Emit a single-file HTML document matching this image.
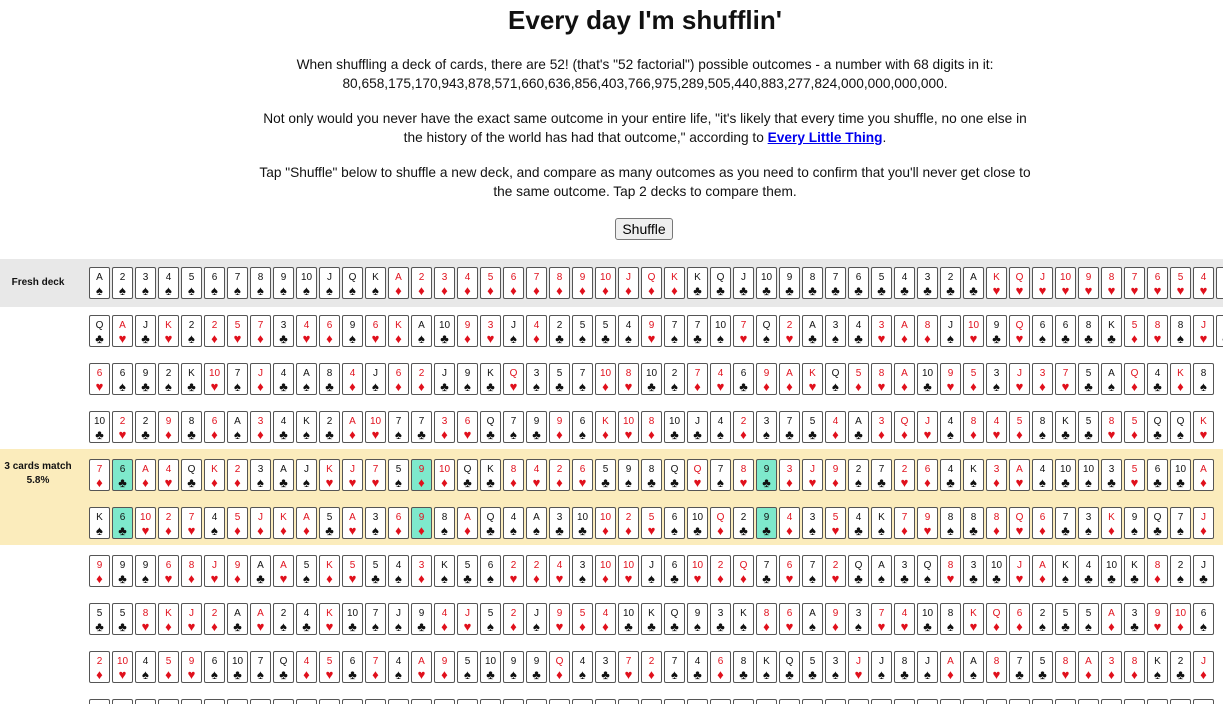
<!DOCTYPE html>
<html style="overflow:hidden;width:1223px;height:704px"><head><meta charset="utf-8"><style>
body{margin:0;width:1223px;height:704px;overflow:hidden;background:#fff;font-family:"Liberation Sans",sans-serif;color:#111;position:relative}
h1{position:absolute;top:4px;left:0;width:1290px;text-align:center;margin:0;font-size:26px;font-weight:bold;line-height:32px}
.p{position:absolute;left:255px;width:780px;text-align:center;font-size:13.7px;line-height:19px;margin:0}
a{color:#00e;text-decoration:underline;font-weight:bold}
button{position:absolute;left:615px;top:218px;width:58px;height:22px;font-size:14px;font-family:"Liberation Sans",sans-serif;padding:0;border:1px solid #777;border-radius:3px;background:#efefef}
.band{position:absolute;left:0;width:1223px}
.row{position:absolute;left:89px;height:34px;white-space:nowrap;width:1300px}
.lab{position:absolute;left:0;width:76px;text-align:center;font-size:10px;font-weight:bold;line-height:14px}
i{display:inline-block;font-style:normal;width:19px;border:1px solid #555;border-radius:2px;background:#fff;margin-right:2px;text-align:center;font-size:10px;line-height:12px;padding-top:4px;box-sizing:content-box;height:26px;vertical-align:top;color:#111}
i b{display:block;font-size:13px;line-height:14px;font-weight:normal}
i.r{color:#e0101c}
i.m{background:#7ee9cc}
</style></head><body>
<h1>Every day I'm shufflin'</h1>
<p class="p" style="top:55px">When shuffling a deck of cards, there are 52! (that's "52 factorial") possible outcomes - a number with 68 digits in it: 80,658,175,170,943,878,571,660,636,856,403,766,975,289,505,440,883,277,824,000,000,000,000.</p>
<p class="p" style="top:109px">Not only would you never have the exact same outcome in your entire life, "it's likely that every time you shuffle, no one else in the history of the world has had that outcome," according to <a>Every Little Thing</a>.</p>
<p class="p" style="top:163px">Tap "Shuffle" below to shuffle a new deck, and compare as many outcomes as you need to confirm that you'll never get close to the same outcome. Tap 2 decks to compare them.</p>
<button>Shuffle</button>
<div class="band" style="top:259px;height:48px;background:#e8e8e8"></div>
<div class="band" style="top:449px;height:96px;background:#fbecbc"></div>
<div class="lab" style="top:276px">Fresh deck</div>
<div class="lab" style="top:460px">3 cards match<br>5.8%</div>

<div class="row" style="top:267px"><i>A<b>♠</b></i><i>2<b>♠</b></i><i>3<b>♠</b></i><i>4<b>♠</b></i><i>5<b>♠</b></i><i>6<b>♠</b></i><i>7<b>♠</b></i><i>8<b>♠</b></i><i>9<b>♠</b></i><i>10<b>♠</b></i><i>J<b>♠</b></i><i>Q<b>♠</b></i><i>K<b>♠</b></i><i class=r>A<b>♦</b></i><i class=r>2<b>♦</b></i><i class=r>3<b>♦</b></i><i class=r>4<b>♦</b></i><i class=r>5<b>♦</b></i><i class=r>6<b>♦</b></i><i class=r>7<b>♦</b></i><i class=r>8<b>♦</b></i><i class=r>9<b>♦</b></i><i class=r>10<b>♦</b></i><i class=r>J<b>♦</b></i><i class=r>Q<b>♦</b></i><i class=r>K<b>♦</b></i><i>K<b>♣</b></i><i>Q<b>♣</b></i><i>J<b>♣</b></i><i>10<b>♣</b></i><i>9<b>♣</b></i><i>8<b>♣</b></i><i>7<b>♣</b></i><i>6<b>♣</b></i><i>5<b>♣</b></i><i>4<b>♣</b></i><i>3<b>♣</b></i><i>2<b>♣</b></i><i>A<b>♣</b></i><i class=r>K<b>♥</b></i><i class=r>Q<b>♥</b></i><i class=r>J<b>♥</b></i><i class=r>10<b>♥</b></i><i class=r>9<b>♥</b></i><i class=r>8<b>♥</b></i><i class=r>7<b>♥</b></i><i class=r>6<b>♥</b></i><i class=r>5<b>♥</b></i><i class=r>4<b>♥</b></i><i class=r>3<b>♥</b></i></div>

<div class="row" style="top:315px"><i>Q<b>♣</b></i><i class=r>A<b>♥</b></i><i>J<b>♣</b></i><i class=r>K<b>♥</b></i><i>2<b>♠</b></i><i class=r>2<b>♦</b></i><i class=r>5<b>♥</b></i><i class=r>7<b>♦</b></i><i>3<b>♣</b></i><i class=r>4<b>♥</b></i><i class=r>6<b>♦</b></i><i>9<b>♠</b></i><i class=r>6<b>♥</b></i><i class=r>K<b>♦</b></i><i>A<b>♠</b></i><i>10<b>♣</b></i><i class=r>9<b>♦</b></i><i class=r>3<b>♥</b></i><i>J<b>♠</b></i><i class=r>4<b>♦</b></i><i>2<b>♣</b></i><i>5<b>♠</b></i><i>5<b>♣</b></i><i>4<b>♠</b></i><i class=r>9<b>♥</b></i><i>7<b>♠</b></i><i>7<b>♣</b></i><i>10<b>♠</b></i><i class=r>7<b>♥</b></i><i>Q<b>♠</b></i><i class=r>2<b>♥</b></i><i>A<b>♣</b></i><i>3<b>♠</b></i><i>4<b>♣</b></i><i class=r>3<b>♥</b></i><i class=r>A<b>♦</b></i><i class=r>8<b>♦</b></i><i>J<b>♠</b></i><i class=r>10<b>♥</b></i><i>9<b>♣</b></i><i class=r>Q<b>♥</b></i><i>6<b>♠</b></i><i>6<b>♣</b></i><i>8<b>♣</b></i><i>K<b>♣</b></i><i class=r>5<b>♦</b></i><i class=r>8<b>♥</b></i><i>8<b>♠</b></i><i class=r>J<b>♥</b></i><i>4<b>♣</b></i></div>

<div class="row" style="top:363px"><i class=r>6<b>♥</b></i><i>6<b>♠</b></i><i>9<b>♣</b></i><i>2<b>♠</b></i><i>K<b>♣</b></i><i class=r>10<b>♥</b></i><i>7<b>♠</b></i><i class=r>J<b>♦</b></i><i>4<b>♣</b></i><i>A<b>♠</b></i><i>8<b>♣</b></i><i class=r>4<b>♦</b></i><i>J<b>♠</b></i><i class=r>6<b>♦</b></i><i class=r>2<b>♦</b></i><i>J<b>♣</b></i><i>9<b>♠</b></i><i>K<b>♣</b></i><i class=r>Q<b>♥</b></i><i>3<b>♠</b></i><i>5<b>♣</b></i><i>7<b>♠</b></i><i class=r>10<b>♦</b></i><i class=r>8<b>♥</b></i><i>10<b>♣</b></i><i>2<b>♠</b></i><i class=r>7<b>♦</b></i><i class=r>4<b>♥</b></i><i>6<b>♣</b></i><i class=r>9<b>♦</b></i><i class=r>A<b>♦</b></i><i class=r>K<b>♥</b></i><i>Q<b>♠</b></i><i class=r>5<b>♦</b></i><i class=r>8<b>♥</b></i><i class=r>A<b>♦</b></i><i>10<b>♣</b></i><i class=r>9<b>♥</b></i><i class=r>5<b>♦</b></i><i>3<b>♠</b></i><i class=r>J<b>♥</b></i><i class=r>3<b>♦</b></i><i class=r>7<b>♥</b></i><i>5<b>♣</b></i><i>A<b>♠</b></i><i class=r>Q<b>♦</b></i><i>4<b>♣</b></i><i class=r>K<b>♦</b></i><i>8<b>♠</b></i></div>

<div class="row" style="top:411px"><i>10<b>♣</b></i><i class=r>2<b>♥</b></i><i>2<b>♣</b></i><i class=r>9<b>♦</b></i><i>8<b>♣</b></i><i class=r>6<b>♦</b></i><i>A<b>♠</b></i><i class=r>3<b>♦</b></i><i>4<b>♣</b></i><i>K<b>♠</b></i><i>2<b>♣</b></i><i class=r>A<b>♦</b></i><i class=r>10<b>♥</b></i><i>7<b>♠</b></i><i>7<b>♣</b></i><i class=r>3<b>♦</b></i><i class=r>6<b>♥</b></i><i>Q<b>♣</b></i><i>7<b>♠</b></i><i>9<b>♣</b></i><i class=r>9<b>♦</b></i><i>6<b>♠</b></i><i class=r>K<b>♦</b></i><i class=r>10<b>♥</b></i><i class=r>8<b>♦</b></i><i>10<b>♣</b></i><i>J<b>♣</b></i><i>4<b>♠</b></i><i class=r>2<b>♦</b></i><i>3<b>♠</b></i><i>7<b>♣</b></i><i>5<b>♣</b></i><i class=r>4<b>♦</b></i><i>A<b>♣</b></i><i class=r>3<b>♦</b></i><i class=r>Q<b>♦</b></i><i class=r>J<b>♥</b></i><i>4<b>♠</b></i><i class=r>8<b>♦</b></i><i class=r>4<b>♥</b></i><i class=r>5<b>♦</b></i><i>8<b>♠</b></i><i>K<b>♣</b></i><i>5<b>♣</b></i><i class=r>8<b>♥</b></i><i class=r>5<b>♦</b></i><i>Q<b>♣</b></i><i>Q<b>♠</b></i><i class=r>K<b>♥</b></i></div>

<div class="row" style="top:459px"><i class=r>7<b>♦</b></i><i class=m>6<b>♣</b></i><i class=r>A<b>♦</b></i><i class=r>4<b>♥</b></i><i>Q<b>♣</b></i><i class=r>K<b>♦</b></i><i class=r>2<b>♦</b></i><i>3<b>♠</b></i><i>A<b>♣</b></i><i>J<b>♠</b></i><i class=r>K<b>♥</b></i><i class=r>J<b>♥</b></i><i class=r>7<b>♥</b></i><i>5<b>♠</b></i><i class="r m">9<b>♦</b></i><i class=r>10<b>♦</b></i><i>Q<b>♣</b></i><i>K<b>♣</b></i><i class=r>8<b>♦</b></i><i class=r>4<b>♥</b></i><i class=r>2<b>♦</b></i><i class=r>6<b>♥</b></i><i>5<b>♣</b></i><i>9<b>♠</b></i><i>8<b>♣</b></i><i>Q<b>♣</b></i><i class=r>Q<b>♥</b></i><i>7<b>♠</b></i><i class=r>8<b>♥</b></i><i class=m>9<b>♣</b></i><i class=r>3<b>♦</b></i><i class=r>J<b>♥</b></i><i class=r>9<b>♦</b></i><i>2<b>♠</b></i><i>7<b>♣</b></i><i class=r>2<b>♥</b></i><i class=r>6<b>♦</b></i><i>4<b>♣</b></i><i>K<b>♠</b></i><i class=r>3<b>♦</b></i><i class=r>A<b>♥</b></i><i>4<b>♠</b></i><i>10<b>♣</b></i><i>10<b>♠</b></i><i>3<b>♣</b></i><i class=r>5<b>♥</b></i><i>6<b>♣</b></i><i>10<b>♣</b></i><i class=r>A<b>♦</b></i></div>

<div class="row" style="top:507px"><i>K<b>♠</b></i><i class=m>6<b>♣</b></i><i class=r>10<b>♥</b></i><i class=r>2<b>♦</b></i><i class=r>7<b>♥</b></i><i>4<b>♠</b></i><i class=r>5<b>♦</b></i><i class=r>J<b>♦</b></i><i class=r>K<b>♦</b></i><i class=r>A<b>♦</b></i><i>5<b>♣</b></i><i class=r>A<b>♥</b></i><i>3<b>♠</b></i><i class=r>6<b>♦</b></i><i class="r m">9<b>♦</b></i><i>8<b>♠</b></i><i class=r>A<b>♦</b></i><i>Q<b>♣</b></i><i>4<b>♠</b></i><i>A<b>♠</b></i><i>3<b>♣</b></i><i>10<b>♣</b></i><i class=r>10<b>♦</b></i><i class=r>2<b>♦</b></i><i class=r>5<b>♥</b></i><i>6<b>♠</b></i><i>10<b>♣</b></i><i class=r>Q<b>♦</b></i><i>2<b>♣</b></i><i class=m>9<b>♣</b></i><i class=r>4<b>♦</b></i><i>3<b>♠</b></i><i class=r>5<b>♥</b></i><i>4<b>♣</b></i><i>K<b>♠</b></i><i class=r>7<b>♦</b></i><i class=r>9<b>♥</b></i><i>8<b>♠</b></i><i>8<b>♣</b></i><i class=r>8<b>♦</b></i><i class=r>Q<b>♥</b></i><i class=r>6<b>♦</b></i><i>7<b>♣</b></i><i>3<b>♠</b></i><i class=r>K<b>♦</b></i><i>9<b>♠</b></i><i>Q<b>♣</b></i><i>7<b>♠</b></i><i class=r>J<b>♦</b></i></div>

<div class="row" style="top:555px"><i class=r>9<b>♦</b></i><i>9<b>♣</b></i><i>9<b>♠</b></i><i class=r>6<b>♥</b></i><i class=r>8<b>♦</b></i><i class=r>J<b>♥</b></i><i class=r>9<b>♦</b></i><i>A<b>♣</b></i><i class=r>A<b>♥</b></i><i>5<b>♠</b></i><i class=r>K<b>♦</b></i><i class=r>5<b>♥</b></i><i>5<b>♣</b></i><i>4<b>♠</b></i><i class=r>3<b>♦</b></i><i>K<b>♠</b></i><i>5<b>♣</b></i><i>6<b>♠</b></i><i class=r>2<b>♥</b></i><i class=r>2<b>♦</b></i><i class=r>4<b>♥</b></i><i>3<b>♠</b></i><i class=r>10<b>♦</b></i><i class=r>10<b>♥</b></i><i>J<b>♠</b></i><i>6<b>♣</b></i><i class=r>10<b>♥</b></i><i class=r>2<b>♦</b></i><i class=r>Q<b>♦</b></i><i>7<b>♣</b></i><i class=r>6<b>♥</b></i><i>7<b>♠</b></i><i class=r>2<b>♥</b></i><i>Q<b>♣</b></i><i>A<b>♠</b></i><i>3<b>♣</b></i><i>Q<b>♠</b></i><i class=r>8<b>♥</b></i><i>3<b>♣</b></i><i>10<b>♣</b></i><i class=r>J<b>♥</b></i><i class=r>A<b>♦</b></i><i>K<b>♠</b></i><i>4<b>♣</b></i><i>10<b>♣</b></i><i>K<b>♣</b></i><i class=r>8<b>♦</b></i><i>2<b>♠</b></i><i>J<b>♣</b></i></div>

<div class="row" style="top:603px"><i>5<b>♣</b></i><i>5<b>♣</b></i><i class=r>8<b>♥</b></i><i class=r>K<b>♦</b></i><i class=r>J<b>♥</b></i><i class=r>2<b>♦</b></i><i>A<b>♣</b></i><i class=r>A<b>♥</b></i><i>2<b>♠</b></i><i>4<b>♣</b></i><i class=r>K<b>♥</b></i><i>10<b>♣</b></i><i>7<b>♠</b></i><i>J<b>♠</b></i><i>9<b>♣</b></i><i class=r>4<b>♦</b></i><i class=r>J<b>♥</b></i><i>5<b>♠</b></i><i class=r>2<b>♦</b></i><i>J<b>♠</b></i><i class=r>9<b>♥</b></i><i class=r>5<b>♦</b></i><i class=r>4<b>♦</b></i><i>10<b>♣</b></i><i>K<b>♣</b></i><i>Q<b>♣</b></i><i>9<b>♠</b></i><i>3<b>♣</b></i><i>K<b>♠</b></i><i class=r>8<b>♦</b></i><i class=r>6<b>♥</b></i><i>A<b>♠</b></i><i class=r>9<b>♦</b></i><i>3<b>♠</b></i><i class=r>7<b>♥</b></i><i class=r>4<b>♥</b></i><i>10<b>♣</b></i><i>8<b>♠</b></i><i class=r>K<b>♥</b></i><i class=r>Q<b>♦</b></i><i class=r>6<b>♦</b></i><i>2<b>♠</b></i><i>5<b>♣</b></i><i>5<b>♠</b></i><i class=r>A<b>♦</b></i><i>3<b>♣</b></i><i class=r>9<b>♥</b></i><i class=r>10<b>♦</b></i><i>6<b>♠</b></i></div>

<div class="row" style="top:651px"><i class=r>2<b>♦</b></i><i class=r>10<b>♥</b></i><i>4<b>♠</b></i><i class=r>5<b>♦</b></i><i class=r>9<b>♥</b></i><i>6<b>♠</b></i><i>10<b>♣</b></i><i>7<b>♠</b></i><i>Q<b>♣</b></i><i class=r>4<b>♦</b></i><i class=r>5<b>♥</b></i><i>6<b>♣</b></i><i class=r>7<b>♦</b></i><i>4<b>♠</b></i><i class=r>A<b>♥</b></i><i class=r>9<b>♦</b></i><i>5<b>♠</b></i><i>10<b>♣</b></i><i>9<b>♠</b></i><i>9<b>♣</b></i><i class=r>Q<b>♦</b></i><i>4<b>♠</b></i><i>3<b>♣</b></i><i class=r>7<b>♥</b></i><i class=r>2<b>♦</b></i><i>7<b>♠</b></i><i>4<b>♣</b></i><i class=r>6<b>♦</b></i><i>8<b>♣</b></i><i>K<b>♠</b></i><i>Q<b>♣</b></i><i>5<b>♣</b></i><i>3<b>♠</b></i><i class=r>J<b>♥</b></i><i>J<b>♠</b></i><i>8<b>♣</b></i><i>J<b>♠</b></i><i class=r>A<b>♦</b></i><i>A<b>♠</b></i><i class=r>8<b>♥</b></i><i>7<b>♣</b></i><i>5<b>♣</b></i><i class=r>8<b>♥</b></i><i class=r>A<b>♦</b></i><i class=r>3<b>♦</b></i><i class=r>8<b>♦</b></i><i>K<b>♠</b></i><i>2<b>♣</b></i><i class=r>J<b>♦</b></i></div>

<div class="row" style="top:699px"><i class=r>3<b>♦</b></i><i class=r>8<b>♥</b></i><i>4<b>♠</b></i><i class=r>5<b>♦</b></i><i>9<b>♣</b></i><i class=r>6<b>♥</b></i><i>10<b>♣</b></i><i>7<b>♠</b></i><i class=r>Q<b>♦</b></i><i>4<b>♣</b></i><i class=r>5<b>♥</b></i><i>6<b>♣</b></i><i class=r>7<b>♦</b></i><i>4<b>♠</b></i><i class=r>A<b>♥</b></i><i>9<b>♠</b></i><i class=r>5<b>♦</b></i><i>10<b>♣</b></i><i>9<b>♠</b></i><i class=r>9<b>♥</b></i><i>Q<b>♠</b></i><i class=r>4<b>♦</b></i><i>3<b>♣</b></i><i class=r>7<b>♥</b></i><i>2<b>♠</b></i><i>7<b>♣</b></i><i class=r>4<b>♥</b></i><i>6<b>♠</b></i><i class=r>8<b>♦</b></i><i>K<b>♣</b></i><i class=r>Q<b>♥</b></i><i>5<b>♠</b></i><i class=r>3<b>♦</b></i><i>J<b>♣</b></i><i class=r>J<b>♦</b></i><i>8<b>♠</b></i><i class=r>J<b>♥</b></i><i>A<b>♣</b></i><i class=r>A<b>♦</b></i><i>8<b>♣</b></i><i class=r>7<b>♥</b></i><i>5<b>♠</b></i><i class=r>8<b>♦</b></i><i>A<b>♠</b></i><i>3<b>♣</b></i><i class=r>8<b>♥</b></i><i>K<b>♣</b></i><i class=r>2<b>♦</b></i><i>J<b>♠</b></i></div>
</body></html>
